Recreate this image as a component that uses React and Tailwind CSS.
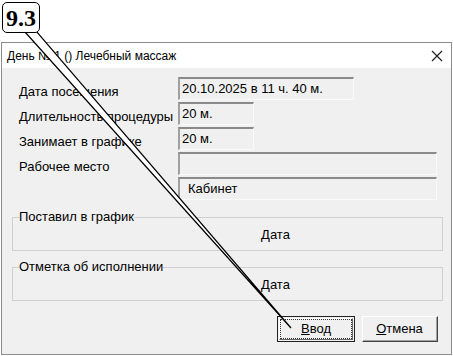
const FIELD = 'h-[23px] bg-[#f0f0f0] border-t-2 border-l-2 border-b border-r border-t-[#8a8a8a] border-l-[#a0a0a0] border-b-[#fafafa] border-r-[#fafafa] px-[2px] text-[13px] leading-[19px] text-black'

const ROWS = [
  { label: 'Дата посещения', value: '20.10.2025 в 11 ч. 40 м.', w: 'w-[176px]' },
  { label: 'Длительность процедуры', value: '20 м.', w: 'w-[76px]' },
  { label: 'Занимает в графике', value: '20 м.', w: 'w-[76px]' },
  { label: 'Рабочее место', value: '', w: 'w-[259px]' },
]

export default function App() {
  return (
    <div
      className="relative w-[453px] h-[356px] bg-white overflow-hidden"
      style={{ fontFamily: '"Liberation Sans", Arial, sans-serif' }}
    >
      {/* Dialog window */}
      <div className="ml-[1px] mt-[42px] w-[451px] h-[313px] border border-[#8c8c8c] bg-[#f0f0f0] flex flex-col">
        {/* Title bar */}
        <div className="h-[25px] bg-white flex items-center justify-between pl-[5px] pr-[8px]">
          <span className="text-[12px] text-black">День № 1 () Лечебный массаж</span>
          <svg width="12" height="12" viewBox="0 0 12 12">
            <path d="M1 1 L11 11 M11 1 L1 11" stroke="#222" strokeWidth="1.2" fill="none" />
          </svg>
        </div>

        {/* Fields */}
        <div className="pt-[9px] pl-[17px] flex flex-col gap-[2px]">
          {ROWS.map((r) => (
            <div key={r.label} className="flex">
              <div className="w-[159px] pt-[7px] text-[13px] leading-[16px] text-black">{r.label}</div>
              <div className={`${FIELD} ${r.w}`}>{r.value}</div>
            </div>
          ))}
          <div className="flex">
            <div className="w-[159px]" />
            <div className={`${FIELD} w-[259px] pl-[8px]`}>Кабинет</div>
          </div>
        </div>

        {/* Group boxes */}
        <div className="mt-[17px] ml-[10px] mr-[8px] flex flex-col gap-[16px]">
          <GroupBox title="Поставил в график" />
          <GroupBox title="Отметка об исполнении" />
        </div>

        {/* Buttons */}
        <div className="mt-[15px] flex justify-end gap-[7px] pr-[13px]">
          <button className="w-[78px] h-[26px] bg-[#f0f0f0] border border-[#222] p-[1px] text-[13px] text-black">
            <div className="h-full border border-[#888] border-b-[#696969] border-r-[#696969] border-t-white border-l-white">
              <div className="h-full border border-dotted border-[#333] flex items-center justify-center">
                <span><span className="underline">В</span>вод</span>
              </div>
            </div>
          </button>
          <button className="w-[76px] h-[26px] bg-[#f0f0f0] border border-t-white border-l-white border-b-[#444] border-r-[#444] text-[13px] text-black">
            <div className="h-full border-b border-r border-[#a0a0a0] flex items-center justify-center">
              <span><span className="underline">О</span>тмена</span>
            </div>
          </button>
        </div>
      </div>

      {/* Callout */}
      <svg className="absolute left-0 top-0 pointer-events-none" width="453" height="356">
        <polygon points="25,32 37,32 291,328" fill="white" stroke="black" strokeWidth="1.2" strokeLinejoin="miter" />
      </svg>
      <div
        className="absolute left-[2px] top-[2px] w-[38px] h-[31px] rounded-[5px] border-[1.5px] border-black bg-white flex items-center justify-center text-[24px] font-bold leading-none text-black"
        style={{ fontFamily: '"Liberation Serif", "Times New Roman", serif' }}
      >
        9.3
      </div>
    </div>
  )
}

function GroupBox({ title }) {
  return (
    <div className="relative h-[34px] border border-[#d0d0d0] flex items-center justify-center">
      <span className="absolute left-[6px] top-[-9px] bg-[#f0f0f0] text-[13px] leading-[16px] text-black">{title}</span>
      <span className="pt-[2px] ml-[96px] text-[13px] text-black">Дата</span>
    </div>
  )
}
